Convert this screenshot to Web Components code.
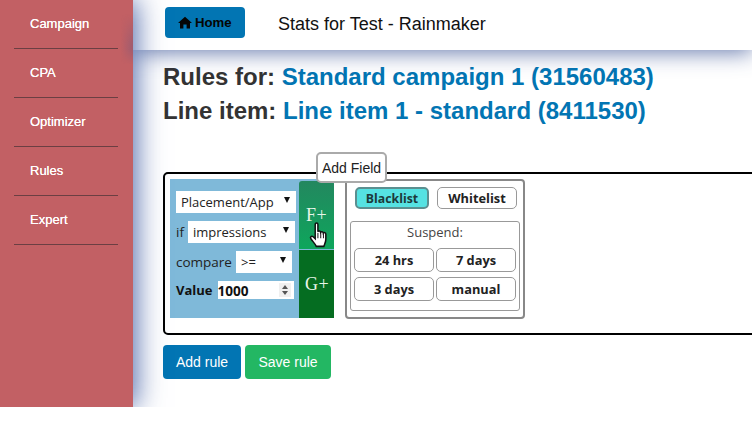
<!DOCTYPE html>
<html>
<head>
<meta charset="utf-8">
<style>
  html, body { margin: 0; height: 100%; background: #fff; overflow: hidden; }
  body { font-family: "Liberation Sans", Arial, sans-serif; }
</style>
</head>
<body>
<rm-app></rm-app>
<script>
class RmSidebar extends HTMLElement {
  constructor() {
    super();
    this.attachShadow({mode: "open"});
    var items = ["Campaign", "CPA", "Optimizer", "Rules", "Expert"];
    this.shadowRoot.innerHTML = `
      <style>
        :host { display: block; background: #c26064; height: 407px; box-sizing: border-box; padding: 0 15px 0 14px; }
        .item { height: 49px; box-sizing: border-box; border-bottom: 1px solid #6b3f43; padding: 16px 0 0 16px;
                color: #fff; font-size: 13px; line-height: 16px; text-shadow: 0 0 .6px #fff; }
        .dim { position: absolute; right: 0; top: 14px; width: 12px; height: 50px;
               background: linear-gradient(90deg, rgba(120,90,130,0), rgba(110,85,125,.4));
               -webkit-mask-image: linear-gradient(180deg, transparent, #000 60%, #000 70%, transparent); }
      </style>
      ${items.map(function (t) { return `<div class="item">${t}</div>`; }).join("")}
      <div class="dim"></div>
    `;
  }
}
customElements.define("rm-sidebar", RmSidebar);

class RmHeader extends HTMLElement {
  constructor() {
    super();
    this.attachShadow({mode: "open"});
    this.shadowRoot.innerHTML = `
      <style>
        :host { display: flex; align-items: flex-start; height: 50px; box-sizing: border-box; padding: 7px 0 0 32px; background: #fff;
                box-shadow: 0 2px 22px rgba(60,85,150,.8); position: relative; }
        .home { width: 80px; height: 31px; box-sizing: border-box; background: #0275b3; border-radius: 4px; color: #050505;
                font: bold 13.2px "Liberation Sans", sans-serif; display: flex; align-items: center; gap: 3px; padding-left: 13px; }
        svg { width: 14px; height: 13px; }
        .title { margin-left: 33px; font-size: 18px; line-height: 22px; padding-top: 6px; color: #111; }
      </style>
      <div class="home"><svg viewBox="0 0 14 13"><path d="M7 .8 L14 7 H12 V12.5 H8.6 V8.5 H5.4 V12.5 H2 V7 H0 Z" fill="#050505"/></svg>Home</div>
      <div class="title"><slot></slot></div>
    `;
  }
}
customElements.define("rm-header", RmHeader);

class RmFieldPanel extends HTMLElement {
  constructor() {
    super();
    this.attachShadow({mode: "open"});
    this.shadowRoot.innerHTML = `
      <style>
        :host { display: flex; background: #7fb9d9; width: 164px; height: 139px; font: 13.5px "Open Sans", sans-serif; color: #222; }
        .fields { width: 129px; box-sizing: border-box; padding: 12px 0 0 6px; }
        .row { display: flex; align-items: center; height: 22px; margin-bottom: 8px; }
        .row.last { height: 18px; margin: 0; }
        .sel { background: #fff; height: 22px; box-sizing: border-box; display: flex; align-items: center; justify-content: space-between;
               padding: 0 6px 0 5px; color: #222; font-size: 13px; white-space: nowrap; }
        .sel i { width: 0; height: 0; border: 3.5px solid transparent; border-top: 6px solid #111; border-bottom: 0; margin-bottom: 5px; }
        .lbl { margin-right: 4px; }
        .num { background: #fff; width: 76px; height: 18px; display: flex; align-items: center; justify-content: space-between; margin-left: 5px;
               box-sizing: border-box; padding: 0 3px 0 0; font: bold 13.6px "Open Sans", sans-serif; color: #111; }
        .spin { display: flex; flex-direction: column; gap: 2px; background: #f0f0f0; padding: 2px 3px; }
        .spin b { width: 0; height: 0; border: 3.5px solid transparent; }
        .spin b.u { border-bottom: 4px solid #555; border-top: 0; }
        .spin b.d { border-top: 4px solid #555; border-bottom: 0; }
        .btns { width: 35px; display: flex; flex-direction: column; gap: 1px; padding-top: 2px; }
        .btn { height: 68px; display: flex; align-items: center; justify-content: center; color: #e9f5e9; font: 18px "Liberation Serif", serif; letter-spacing: .5px; }
        .f { background: linear-gradient(180deg, #23875f, #0ea65c); border-radius: 3px 3px 0 0; }
        .g { background: #056d21; padding-left: 1px; box-sizing: border-box; }
      </style>
      <div class="fields">
        <div class="row"><div class="sel" style="width:120px">Placement/App<i></i></div></div>
        <div class="row"><span class="lbl">if</span><div class="sel" style="width:107px">impressions<i></i></div></div>
        <div class="row"><span class="lbl">compare</span><div class="sel" style="width:56px">&gt;=<i></i></div></div>
        <div class="row last"><b style="font-size:13px;color:#111">Value</b><div class="num">1000<span class="spin"><b class="u"></b><b class="d"></b></span></div></div>
      </div>
      <div class="btns">
        <div class="btn f">F+</div>
        <div class="btn g">G+</div>
      </div>
    `;
  }
}
customElements.define("rm-field-panel", RmFieldPanel);

class RmActionPanel extends HTMLElement {
  constructor() {
    super();
    this.attachShadow({mode: "open"});
    this.shadowRoot.innerHTML = `
      <style>
        :host { display: block; width: 180px; height: 140px; box-sizing: border-box; border: 2px solid #888; border-radius: 4px;
                padding: 6px 3px 0 3px; font: 13px "Open Sans", sans-serif; color: #222; }
        .top { display: flex; gap: 8px; padding: 0 0 0 5px; }
        .b { height: 24px; box-sizing: border-box; border: 1px solid #999; border-radius: 5px; background: #fff; display: flex; align-items: center;
             justify-content: center; font-weight: bold; font-size: 12.8px; color: #222; }
        .top .b { height: 22px; width: 80px; }
        .top .on { background: #55e2e2; border: 2px solid #5b8f90; width: 74px; font-size: 12.3px; color: #1c3a3a; }
        .suspend { margin-top: 12px; height: 90px; box-sizing: border-box; border: 1px solid #999; border-radius: 3px; padding: 0 3px; }
        .cap { text-align: center; height: 26px; line-height: 21px; color: #444; }
        .grid { display: grid; grid-template-columns: 80px 80px; gap: 5px 2px; }
      </style>
      <div class="top"><div class="b on">Blacklist</div><div class="b">Whitelist</div></div>
      <div class="suspend">
        <div class="cap">Suspend:</div>
        <div class="grid">
          <div class="b">24 hrs</div><div class="b">7 days</div>
          <div class="b">3 days</div><div class="b">manual</div>
        </div>
      </div>
    `;
  }
}
customElements.define("rm-action-panel", RmActionPanel);

class RmApp extends HTMLElement {
  constructor() {
    super();
    this.attachShadow({mode: "open"});
    this.shadowRoot.innerHTML = `
      <style>
        :host { display: flex; height: 407px; overflow: hidden; font-family: "Liberation Sans", sans-serif; }
        rm-sidebar { width: 133px; flex: none; position: relative; z-index: 2; box-shadow: 3px 0 26px rgba(50,80,155,.85); }
        main { flex: 1; min-width: 0; position: relative; }
        rm-header { z-index: 1; }
        .content { padding: 10px 0 0 30px; }
        h2 { margin: 0; font-size: 24px; line-height: 34px; height: 34px; color: #333; font-weight: bold; white-space: nowrap; }
        h2 span { color: #0275b3; }
        .rule { margin-top: 44px; width: 640px; height: 163px; box-sizing: border-box; border: 2px solid #000; border-radius: 5px;
                padding: 5px 0 0 5px; display: flex; gap: 11px; }
        .acts { display: flex; gap: 4px; margin-top: 10px; }
        .act { height: 34px; box-sizing: border-box; border-radius: 4px; color: #fff; font-size: 14px; display: flex; align-items: center; justify-content: center; }
        .tip { position: absolute; left: 183px; top: 152px; width: 71px; height: 31px; box-sizing: border-box; background: #fff; border: 2px solid #aaa;
               border-radius: 5px; font-size: 14px; color: #222; display: flex; align-items: center; justify-content: center; z-index: 3; }
        .hand { position: absolute; left: 175px; top: 222px; z-index: 4; width: 22px; height: 26px; }
      </style>
      <rm-sidebar></rm-sidebar>
      <main>
        <rm-header>Stats for Test - Rainmaker</rm-header>
        <div class="content">
          <h2>Rules for: <span>Standard campaign 1 (31560483)</span></h2>
          <h2>Line item: <span>Line item 1 - standard (8411530)</span></h2>
          <div class="rule">
            <rm-field-panel></rm-field-panel>
            <rm-action-panel></rm-action-panel>
          </div>
          <div class="acts">
            <div class="act" style="width:78px;background:#0275b3">Add rule</div>
            <div class="act" style="width:86px;background:#23b763">Save rule</div>
          </div>
        </div>
        <div class="tip">Add Field</div>
        <svg class="hand" viewBox="0 0 20 24"><path d="M6.5 2.2 C6.5 .6 9 .6 9 2.2 V9 C9.5 8 11.2 8 11.5 9.5 C12 8.6 13.8 8.7 14 10.2 C14.6 9.4 16.3 9.7 16.3 11.2 V16 C16.3 19 15 20.5 14.5 22.5 H7.5 C6.5 20 4.5 18.5 2.5 15.5 C1.4 13.8 3.2 12.4 4.6 13.6 L6.5 15.5 Z" fill="#fff" stroke="#111" stroke-width="1.4"/><path d="M9 10v5M11.6 10v5M14.1 10.5v4.5" stroke="#111" stroke-width=".9" fill="none"/></svg>
      </main>
    `;
  }
}
customElements.define("rm-app", RmApp);
</script>
</body>
</html>
